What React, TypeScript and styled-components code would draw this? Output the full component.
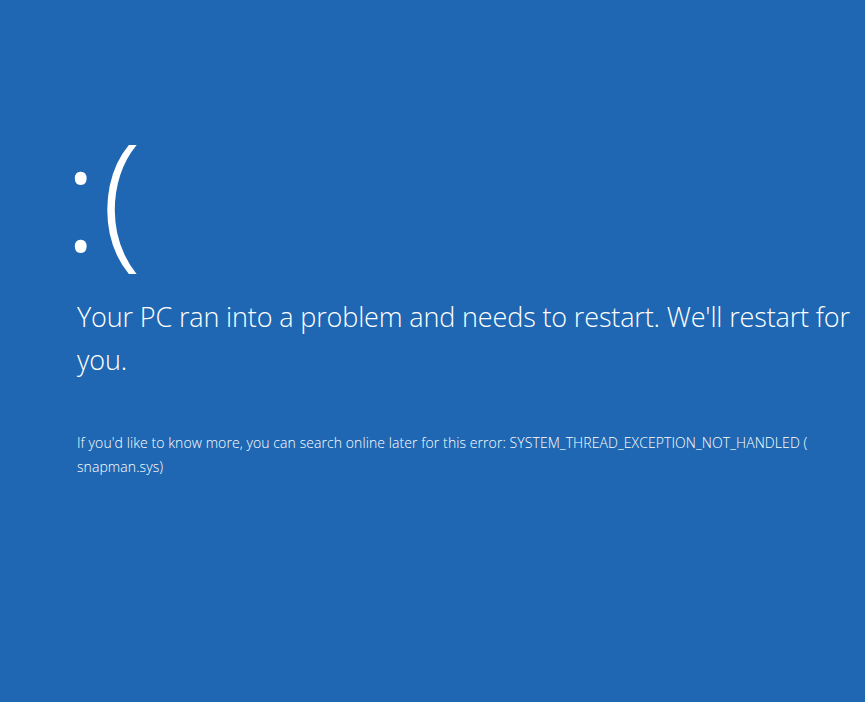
import React from "react";
import styled, { createGlobalStyle } from "styled-components";

const GlobalStyle = createGlobalStyle`
  html, body {
    margin: 0;
    padding: 0;
    background-color: #1f67b2;
  }
`;

const Screen = styled.main`
  width: 865px;
  height: 702px;
  box-sizing: border-box;
  padding: 114px 10px 0 77px;
  background-color: #1f67b2;
  color: #ffffff;
  font-family: "Open Sans", "Noto Sans", sans-serif;
  font-weight: 300;
  overflow: hidden;
`;

const Frown = styled.div`
  font-size: 148px;
  line-height: 160px;
  margin-left: -14px;
  letter-spacing: 3px;
`;

const Headline = styled.h1`
  margin: 21px 0 0;
  font-size: 27px;
  font-weight: 300;
  line-height: 43px;
  letter-spacing: -0.15px;
`;

const Details = styled.p`
  margin: 50px 0 0;
  font-size: 14px;
  line-height: 24px;
  font-weight: 300;
  letter-spacing: 0.08px;
`;

const App: React.FC = () => {
  return (
    <>
      <GlobalStyle />
      <Screen>
        <Frown>:(</Frown>
        <Headline>
          Your PC ran into a problem and needs to restart. We'll restart for
          you.
        </Headline>
        <Details>
          If you'd like to know more, you can search online later for this
          error: SYSTEM_THREAD_EXCEPTION_NOT_HANDLED ( snapman.sys)
        </Details>
      </Screen>
    </>
  );
};

export default App;
